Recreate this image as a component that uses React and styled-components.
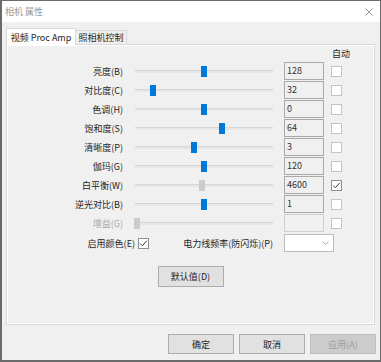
import React from 'react';
import styled, { createGlobalStyle } from 'styled-components';

const GlobalStyle = createGlobalStyle`
  html, body {
    margin: 0;
    padding: 0;
    background: #ffffff;
  }
`;

const Window = styled.div`
  width: 381px;
  height: 362px;
  box-sizing: border-box;
  border: 1px solid #6b6b6b;
  border-left-width: 2px;
  border-bottom-width: 2px;
  background: #f0f0f0;
  display: flex;
  flex-direction: column;
  font-family: "Noto Sans CJK SC", "Noto Sans", sans-serif;
  font-size: 9px;
  color: #1e1e1e;
  overflow: hidden;
`;

const TitleBar = styled.div`
  height: 21px;
  flex: 0 0 21px;
  background: #ffffff;
  display: flex;
  align-items: center;
  justify-content: space-between;
  padding: 0 7px 0 3px;
  color: #9a9a9a;
`;

const Body = styled.div`
  padding: 6px 5px 0 4px;
  display: flex;
  flex-direction: column;
`;

const TabRow = styled.div`
  display: flex;
  align-items: flex-end;
  height: 16px;
`;

const Tab = styled.div`
  box-sizing: border-box;
  width: ${(p) => p.$width}px;
  height: ${(p) => (p.$active ? 17 : 14)}px;
  margin-bottom: ${(p) => (p.$active ? -1 : 0)}px;
  margin-left: ${(p) => (p.$active ? 0 : -1)}px;
  background: ${(p) => (p.$active ? '#ffffff' : '#f0f0f0')};
  border: 1px solid #d9d9d9;
  border-bottom: none;
  display: flex;
  align-items: center;
  justify-content: center;
  position: relative;
  z-index: ${(p) => (p.$active ? 1 : 0)};
  white-space: nowrap;
  color: #1e1e1e;
`;

const Panel = styled.div`
  box-sizing: border-box;
  height: 281px;
  border: 1px solid #d9d9d9;
  box-shadow: inset 0 0 0 1px #ffffff;
  display: flex;
  flex-direction: column;
`;

const HeaderRow = styled.div`
  height: 17px;
  display: flex;
  align-items: center;
  padding-left: 325px;
`;

const Row = styled.div`
  height: 19px;
  display: flex;
  align-items: center;
`;

const Label = styled.div`
  width: 116px;
  text-align: right;
  white-space: nowrap;
  color: ${(p) => (p.$disabled ? '#a8a8a8' : '#1e1e1e')};
`;

const Slider = styled.div`
  position: relative;
  width: 138px;
  height: 19px;
  margin-left: 12px;

  &::before {
    content: "";
    position: absolute;
    left: 0;
    right: 0;
    top: 8px;
    height: 3px;
    box-sizing: border-box;
    background: #e7e7e7;
    border-top: 1px solid #d6d6d6;
  }
`;

const Thumb = styled.div`
  position: absolute;
  top: 4px;
  width: 6px;
  height: 11px;
  margin-left: -3px;
  background: ${(p) => (p.$disabled ? '#cccccc' : '#0078d7')};
`;

const ValueBox = styled.div`
  box-sizing: border-box;
  align-self: flex-start;
  width: 40px;
  height: 18px;
  margin-left: 11px;
  border: 1px solid ${(p) => (p.$disabled ? '#cfcfcf' : '#a9a9a9')};
  background: #f0f0f0;
  padding-left: 2px;
  line-height: 16px;
  color: #333333;
`;

const Check = styled.div`
  box-sizing: border-box;
  width: 11px;
  height: 11px;
  margin-left: ${(p) => p.$gap}px;
  border: 1px solid ${(p) => (p.$checked ? '#8f8f8f' : '#c4c4c4')};
  background: #ffffff;
  display: flex;
  align-items: center;
  justify-content: center;
`;

const OptionRow = styled.div`
  height: 18px;
  margin-top: 1px;
  display: flex;
  align-items: center;
`;

const OptionLabel = styled.div`
  width: ${(p) => p.$width}px;
  text-align: right;
  white-space: nowrap;
`;

const Select = styled.div`
  box-sizing: border-box;
  width: 50px;
  height: 18px;
  margin-left: 11px;
  background: #ffffff;
  border: 1px solid #bcbcbc;
  display: flex;
  align-items: center;
  justify-content: flex-end;
  padding-right: 4px;
`;

const Button = styled.div`
  box-sizing: border-box;
  width: ${(p) => p.$width}px;
  height: ${(p) => p.$height}px;
  background: ${(p) => (p.$disabled ? '#cccccc' : '#e1e1e1')};
  border: 1px solid ${(p) => (p.$disabled ? '#bfbfbf' : '#adadad')};
  color: ${(p) => (p.$disabled ? '#9d9d9d' : '#1e1e1e')};
  display: flex;
  align-items: center;
  justify-content: center;
  white-space: nowrap;
`;

const DefaultWrap = styled.div`
  display: flex;
  justify-content: center;
  margin-top: 14px;
`;

const Footer = styled.div`
  display: flex;
  justify-content: flex-end;
  gap: 5px;
  margin-top: 9px;
  margin-right: -1px;
`;

const CloseIcon = () => (
  <svg width="8" height="8" viewBox="0 0 8 8">
    <path d="M0.5 0.5 L7.5 7.5 M7.5 0.5 L0.5 7.5" stroke="#8a8a8a" strokeWidth="0.9" fill="none" />
  </svg>
);

const CheckMark = () => (
  <svg width="9" height="9" viewBox="0 0 9 9">
    <path d="M1.3 4.6 L3.4 6.7 L7.8 1.8" stroke="#333" strokeWidth="1" fill="none" />
  </svg>
);

const Chevron = () => (
  <svg width="7" height="4" viewBox="0 0 7 4">
    <path d="M0.5 0.5 L3.5 3.5 L6.5 0.5" stroke="#9a9a9a" strokeWidth="0.9" fill="none" />
  </svg>
);

const rows = [
  { label: '亮度(B)', value: '128', pos: 50 },
  { label: '对比度(C)', value: '32', pos: 13 },
  { label: '色调(H)', value: '0', pos: 50 },
  { label: '饱和度(S)', value: '64', pos: 63 },
  { label: '清晰度(P)', value: '3', pos: 43 },
  { label: '伽玛(G)', value: '120', pos: 50 },
  { label: '白平衡(W)', value: '4600', pos: 48.5, auto: true },
  { label: '逆光对比(B)', value: '1', pos: 50 },
  { label: '增益(G)', value: '', pos: 1.5, disabled: true },
];

export default function App() {
  return (
    <>
      <GlobalStyle />
      <Window>
        <TitleBar>
          <span>相机 属性</span>
          <CloseIcon />
        </TitleBar>
        <Body>
          <TabRow>
            <Tab $active $width={70}>视频 Proc Amp</Tab>
            <Tab $width={52}>照相机控制</Tab>
          </TabRow>
          <Panel>
            <HeaderRow>自动</HeaderRow>
            {rows.map((r) => (
              <Row key={r.label}>
                <Label $disabled={r.disabled}>{r.label}</Label>
                <Slider>
                  <Thumb $disabled={r.disabled || r.auto} style={{ left: `${r.pos}%` }} />
                </Slider>
                <ValueBox $disabled={r.disabled}>{r.value}</ValueBox>
                <Check $gap={7} $checked={r.auto}>{r.auto && <CheckMark />}</Check>
              </Row>
            ))}
            <OptionRow>
              <OptionLabel $width={128}>启用颜色(E)</OptionLabel>
              <Check $gap={3} $checked>
                <CheckMark />
              </Check>
              <OptionLabel $width={124}>电力线频率(防闪烁)(P)</OptionLabel>
              <Select>
                <Chevron />
              </Select>
            </OptionRow>
            <DefaultWrap>
              <Button $width={66} $height={21}>默认值(D)</Button>
            </DefaultWrap>
          </Panel>
          <Footer>
            <Button $width={66} $height={20}>确定</Button>
            <Button $width={66} $height={20}>取消</Button>
            <Button $width={66} $height={20} $disabled>应用(A)</Button>
          </Footer>
        </Body>
      </Window>
    </>
  );
}
